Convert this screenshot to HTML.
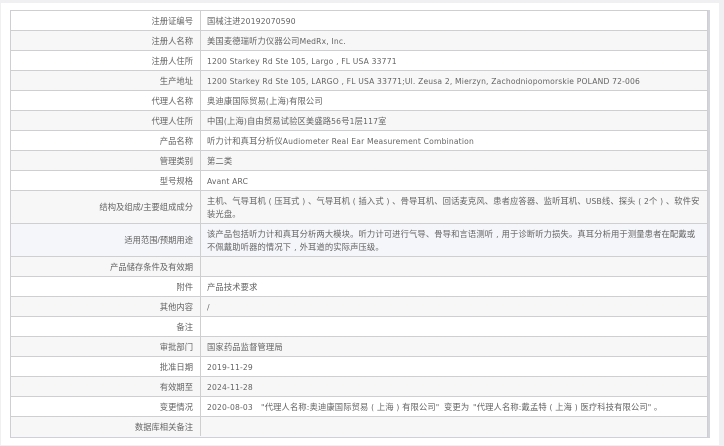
<!DOCTYPE html>
<html><head><meta charset="utf-8">
<style>
html,body{margin:0;padding:0;width:724px;height:446px;overflow:hidden;background:#f0f0f3}
#p{position:absolute;left:1px;top:3px;width:718px;height:442px;background:#fff}
.r{position:absolute;left:10px;width:697px;border-top:1px solid #cfcfd1;box-sizing:border-box}
.g{background:#f7f7f7}.b{background:#f5f6fa}
.v{position:absolute;background:#cfcfd1}
.l,.c{position:absolute;font:8.3px/13px "Liberation Sans","Noto Sans CJK SC",sans-serif;color:#636363;white-space:nowrap;filter:blur(.35px)}
.l{right:531px;text-align:right}
.c{left:207px;letter-spacing:.12px}
.e{font-family:"DejaVu Sans",sans-serif;font-size:7.6px;letter-spacing:.18px}
.p{display:inline-block;width:8.42px;text-align:center;font-family:"DejaVu Sans",sans-serif;font-size:7.5px}
</style></head><body>
<div id="p"></div>
<div class="r" style="top:10px;height:20px"></div>
<div class="r g" style="top:30px;height:20px"></div>
<div class="r" style="top:50px;height:20px"></div>
<div class="r g" style="top:70px;height:20px"></div>
<div class="r" style="top:90px;height:20px"></div>
<div class="r g" style="top:110px;height:20px"></div>
<div class="r" style="top:130px;height:20px"></div>
<div class="r g" style="top:150px;height:20px"></div>
<div class="r" style="top:170px;height:20px"></div>
<div class="r g" style="top:190px;height:33px"></div>
<div class="r b" style="top:223px;height:33px"></div>
<div class="r g" style="top:256px;height:20px"></div>
<div class="r" style="top:276px;height:20px"></div>
<div class="r g" style="top:296px;height:20px"></div>
<div class="r" style="top:316px;height:20px"></div>
<div class="r g" style="top:336px;height:20px"></div>
<div class="r" style="top:356px;height:20px"></div>
<div class="r g" style="top:376px;height:20px"></div>
<div class="r" style="top:396px;height:20px"></div>
<div class="r g" style="top:416px;height:21px"></div>
<div class="v" style="left:10px;top:10px;width:1px;height:427px"></div>
<div class="v" style="left:200px;top:10px;width:1px;height:426px"></div>
<div class="v" style="left:707px;top:10px;width:1px;height:427px"></div>
<div class="v" style="left:708px;top:10px;width:2px;height:428px;background:#d4d4dc"></div>
<div class="v" style="left:10px;top:437px;width:700px;height:1px;background:#d0d0d8"></div>

<div class="l" style="top:15px">注册证编号</div><div class="c" style="top:15px">国械注进<span class="e">20192070590</span></div>
<div class="l" style="top:35px">注册人名称</div><div class="c" style="top:35px">美国麦德瑞听力仪器公司<span class="e">MedRx, Inc.</span></div>
<div class="l" style="top:55px">注册人住所</div><div class="c" style="top:55px"><span class="e">1200 Starkey Rd Ste 105, Largo , FL USA 33771</span></div>
<div class="l" style="top:75px">生产地址</div><div class="c" style="top:75px"><span class="e">1200 Starkey Rd Ste 105, LARGO , FL USA 33771;Ul. Zeusa 2, Mierzyn, Zachodniopomorskie POLAND 72-006</span></div>
<div class="l" style="top:95px">代理人名称</div><div class="c" style="top:95px">奥迪康国际贸易<span class="e">(</span>上海<span class="e">)</span>有限公司</div>
<div class="l" style="top:115px">代理人住所</div><div class="c" style="top:115px">中国<span class="e">(</span>上海<span class="e">)</span>自由贸易试验区美盛路<span class="e">56</span>号<span class="e">1</span>层<span class="e">117</span>室</div>
<div class="l" style="top:135px">产品名称</div><div class="c" style="top:135px">听力计和真耳分析仪<span class="e">Audiometer Real Ear Measurement Combination</span></div>
<div class="l" style="top:155px">管理类别</div><div class="c" style="top:155px">第二类</div>
<div class="l" style="top:175px">型号规格</div><div class="c" style="top:175px"><span class="e">Avant ARC</span></div>
<div class="l" style="top:201px">结构及组成/主要组成成分</div>
<div class="c" style="top:195px">主机、气导耳机<span class="p">(</span>压耳式<span class="p">)</span>、气导耳机<span class="p">(</span>插入式<span class="p">)</span>、骨导耳机、回话麦克风、患者应答器、监听耳机、<span class="e">USB</span>线、探头<span class="p">(</span><span class="e">2</span>个<span class="p">)</span>、软件安</div>
<div class="c" style="top:208px">装光盘。</div>
<div class="l" style="top:234px">适用范围/预期用途</div>
<div class="c" style="top:228px">该产品包括听力计和真耳分析两大模块。听力计可进行气导、骨导和言语测听<span class="p">,</span>用于诊断听力损失。真耳分析用于测量患者在配戴或</div>
<div class="c" style="top:241px">不佩戴助听器的情况下<span class="p">,</span>外耳道的实际声压级。</div>
<div class="l" style="top:261px">产品储存条件及有效期</div>
<div class="l" style="top:281px">附件</div><div class="c" style="top:281px">产品技术要求</div>
<div class="l" style="top:301px">其他内容</div><div class="c" style="top:301px"><span class="e">/</span></div>
<div class="l" style="top:321px">备注</div>
<div class="l" style="top:341px">审批部门</div><div class="c" style="top:341px">国家药品监督管理局</div>
<div class="l" style="top:361px">批准日期</div><div class="c" style="top:361px"><span class="e">2019-11-29</span></div>
<div class="l" style="top:381px">有效期至</div><div class="c" style="top:381px"><span class="e">2024-11-28</span></div>
<div class="l" style="top:401px">变更情况</div>
<div class="c" style="top:401px"><span class="e">2020-08-03</span></div>
<div class="c" style="top:401px;left:261px"><span class="e">"</span>代理人名称<span class="e">:</span>奥迪康国际贸易<span class="p">(</span>上海<span class="p">)</span>有限公司<span class="e">"</span></div>
<div class="c" style="top:401px;left:444px">变更为</div>
<div class="c" style="top:401px;left:473px"><span class="e">"</span>代理人名称<span class="e">:</span>戴孟特<span class="p">(</span>上海<span class="p">)</span>医疗科技有限公司<span class="e">"</span> 。</div>
<div class="l" style="top:421px">数据库相关备注</div>
</body></html>
